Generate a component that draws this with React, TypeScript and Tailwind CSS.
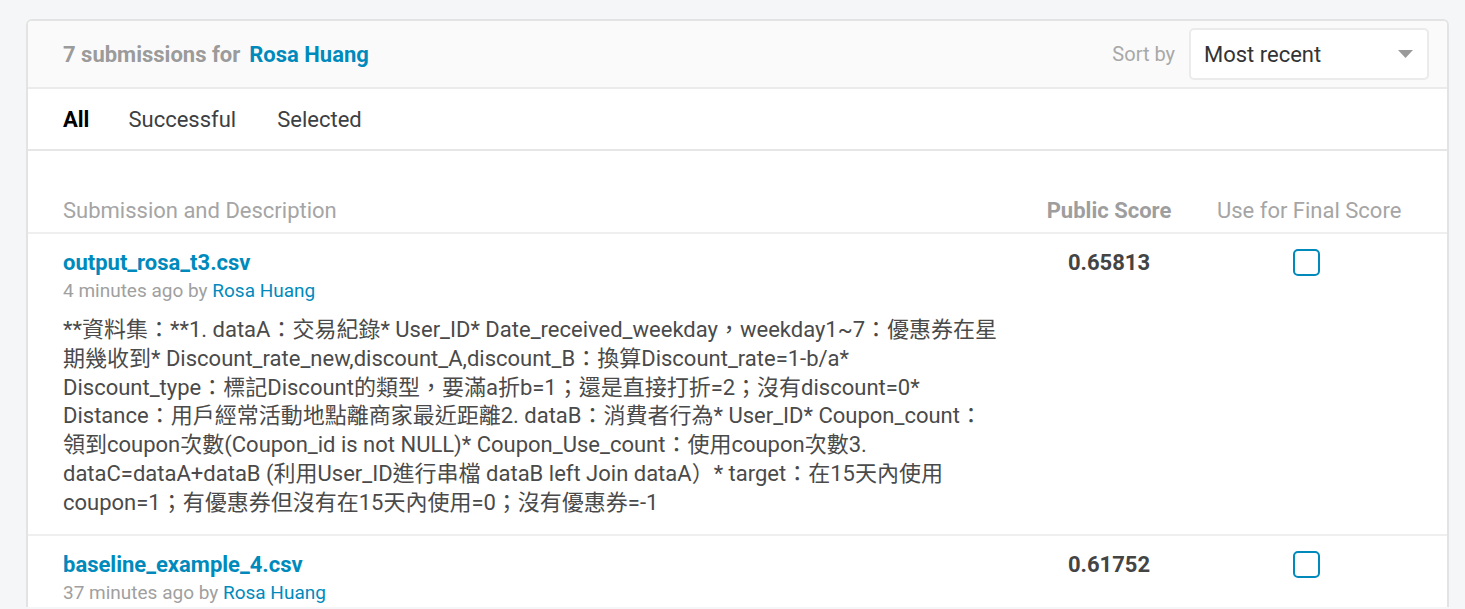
import React from "react";

const FONT = { fontFamily: 'Roboto, "Noto Sans CJK TC", "Noto Sans", sans-serif' };

const descLines = [
  "**資料集：**1. dataA：交易紀錄* User_ID* Date_received_weekday，weekday1~7：優惠券在星",
  "期幾收到* Discount_rate_new,discount_A,discount_B：換算Discount_rate=1-b/a*",
  "Discount_type：標記Discount的類型，要滿a折b=1；還是直接打折=2；沒有discount=0*",
  "Distance：用戶經常活動地點離商家最近距離2. dataB：消費者行為* User_ID* Coupon_count：",
  "領到coupon次數(Coupon_id is not NULL)* Coupon_Use_count：使用coupon次數3.",
  "dataC=dataA+dataB (利用User_ID進行串檔 dataB left Join dataA）* target：在15天內使用",
  "coupon=1；有優惠券但沒有在15天內使用=0；沒有優惠券=-1",
];

function Checkbox() {
  return <div className="w-[27px] h-[27px] rounded-[5px] border-2 border-[#008abc] bg-white ml-[76px]" />;
}

function Row({ name, time, score, description }: { name: string; time: string; score: string; description?: string[] }) {
  return (
    <div className="flex pl-[35px] pt-[15px] pb-[16px] border-b-2 border-[#efefef]">
      <div className="flex-1 min-w-0">
        <div className="text-[22px] leading-[28px] font-bold text-[#008abc]">{name}</div>
        <div className="text-[19px] leading-[28px] text-[#a0a0a0]">
          {time} by <span className="text-[#008abc]">Rosa Huang</span>
        </div>
        {description && (
          <div className="mt-[11px] max-w-[940px] text-[22px] leading-[28.8px] text-[#4a4a4a]">
            {description.map((l, i) => (
              <div key={i} className="whitespace-nowrap">
                {l}
              </div>
            ))}
          </div>
        )}
      </div>
      <div className="w-[150px] text-center text-[22px] leading-[28px] font-bold text-[#444]">{score}</div>
      <div className="w-[189px] ml-[33px] mr-[41px]">
        <Checkbox />
      </div>
    </div>
  );
}

export default function App() {
  return (
    <div className="w-[1465px] h-[609px] overflow-hidden bg-[#f4f6f7] pt-[19px]" style={FONT}>
      <div className="ml-[26px] w-[1423px] h-[588px] overflow-hidden bg-white border-2 border-b-0 border-[#e3e3e3] rounded-t-[6px]">
        {/* Header */}
        <div className="h-[68px] flex items-center justify-between pl-[35px] pr-[18px] bg-[#fafafa] border-b-2 border-[#ebebeb]">
          <div className="flex items-center text-[22px] font-bold">
            <span className="text-[#9b9b9b]">7 submissions for</span>
            <span className="text-[#008abc] ml-[9px]">Rosa Huang</span>
          </div>
          <div className="flex items-center">
            <span className="text-[20px] text-[#a8a8a8] mr-[14px]">Sort by</span>
            <div className="w-[240px] h-[52px] bg-white border-2 border-[#ebebeb] rounded-[5px] flex items-center justify-between pl-[13px] pr-[14px]">
              <span className="text-[22px] text-[#333]">Most recent</span>
              <svg width="15" height="8" viewBox="0 0 15 8">
                <path d="M0 0 L15 0 L7.5 8 Z" fill="#9a9a9a" />
              </svg>
            </div>
          </div>
        </div>
        {/* Tabs */}
        <div className="h-[62px] flex items-center gap-[39px] pl-[35px] border-b-2 border-[#e6e6e6] text-[22px]">
          <span className="font-bold text-black">All</span>
          <span className="text-[#3c4043]">Successful</span>
          <span className="text-[#3c4043] ml-[2px]">Selected</span>
        </div>
        {/* Column header */}
        <div className="flex pl-[35px] pt-[46px] pb-[7px] border-b-2 border-[#efefef] text-[22px] leading-[28px]">
          <div className="flex-1 text-[#a5a5a5]">Submission and Description</div>
          <div className="w-[150px] text-center font-bold text-[#9e9e9e]">Public Score</div>
          <div className="w-[189px] ml-[33px] mr-[41px] text-[#a5a5a5] whitespace-nowrap">Use for Final Score</div>
        </div>
        <Row name="output_rosa_t3.csv" time="4 minutes ago" score="0.65813" description={descLines} />
        <Row name="baseline_example_4.csv" time="37 minutes ago" score="0.61752" />
      </div>
    </div>
  );
}
